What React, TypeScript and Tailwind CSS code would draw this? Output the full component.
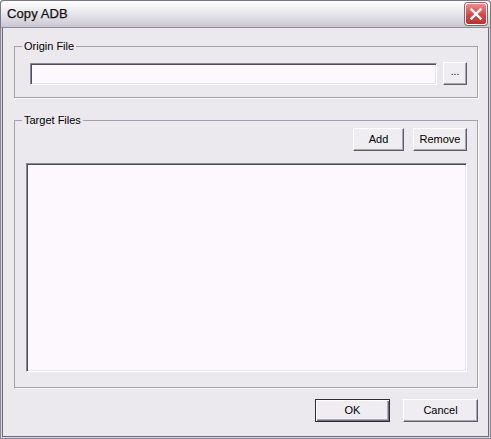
import type { ReactNode } from "react";

const font = { fontFamily: '"Liberation Sans", Arial, sans-serif' };

function Btn({ children, w, primary }: { children: ReactNode; w: string; primary?: boolean }) {
  return (
    <button
      className={
        primary
          ? `${w} h-[23px] shrink-0 border border-[#2f2d38] bg-[#efedf1] text-[11px] text-black shadow-[inset_1px_1px_0_#ffffff,inset_-1px_-1px_0_#6f6d7a,inset_-2px_-2px_0_#aeacb8]`
          : `${w} h-[23px] shrink-0 border border-t-white border-l-white border-r-[#5f5d6a] border-b-[#5f5d6a] bg-[#efedf1] text-[11px] text-black shadow-[inset_-1px_-1px_0_#a8a6b2]`
      }
    >
      {children}
    </button>
  );
}

function Sunken({ className }: { className: string }) {
  return (
    <div
      className={`${className} border border-t-[#8b8996] border-l-[#8b8996] border-r-white border-b-white bg-[#fdf8fd] shadow-[inset_1px_1px_0_#4f4d5a,inset_-1px_-1px_0_#e6e4ea]`}
    />
  );
}

function Group({ label, className, children }: { label: string; className: string; children: ReactNode }) {
  return (
    <fieldset className={`${className} w-[464px] border border-[#a3a1ad] shadow-[1px_1px_0_#ffffff]`}>
      <legend className="ml-[7px] px-[2px] text-[11px] leading-[13px] text-black">{label}</legend>
      {children}
    </fieldset>
  );
}

export default function App() {
  return (
    <div
      style={font}
      className="flex h-[439px] w-[491px] flex-col overflow-hidden rounded-t-[4px] bg-[#ebe9ee] shadow-[inset_0_0_0_1px_#8a8896,inset_0_0_0_2px_#d6d4dc,inset_0_0_0_3px_#6d6b79]"
    >
      <div className="flex h-[28px] shrink-0 items-center justify-between rounded-t-[4px] border border-b-[#8e8c99] border-[#7a7886] bg-gradient-to-b from-[#ffffff] via-[#e6e5ec] to-[#c9c7d2] pl-[6px] pr-[3px]">
        <span className="text-[13px] tracking-[0.1px] text-[#111]" style={{ WebkitTextStroke: "0.25px #111" }}>
          Copy ADB
        </span>
        <div className="flex h-[22px] w-[22px] items-center justify-center rounded-[3px] border border-white bg-gradient-to-b from-[#ee8a8a] via-[#d94a4a] to-[#b93232] shadow-[0_0_0_1px_#a05a5a]">
          <svg width="14" height="14" viewBox="0 0 14 14">
            <path d="M2.5 2.5 L11.5 11.5 M11.5 2.5 L2.5 11.5" stroke="#fff" strokeWidth="2.4" strokeLinecap="square" />
          </svg>
        </div>
      </div>

      <div className="flex flex-col px-[14px]">
        <Group label="Origin File" className="mt-[12px]">
          <div className="flex items-center gap-[6px] pb-[12px] pl-[15px] pr-[10px] pt-[9px]">
            <Sunken className="h-[22px] w-[407px]" />
            <Btn w="w-[24px]">
              <span className="relative top-[-2px] text-[10px]">...</span>
            </Btn>
          </div>
        </Group>

        <Group label="Target Files" className="mt-[16px]">
          <div className="pb-[15px] pl-[11px] pr-[10px] pt-[1px]">
            <div className="flex justify-end gap-[9px]">
              <Btn w="w-[51px]">Add</Btn>
              <Btn w="w-[54px]">Remove</Btn>
            </div>
            <Sunken className="mt-[12px] h-[209px] w-[441px]" />
          </div>
        </Group>

        <div className="mt-[11px] flex w-[464px] justify-end gap-[13px]">
          <Btn w="w-[75px]" primary>
            OK
          </Btn>
          <Btn w="w-[75px]">Cancel</Btn>
        </div>
      </div>
    </div>
  );
}
